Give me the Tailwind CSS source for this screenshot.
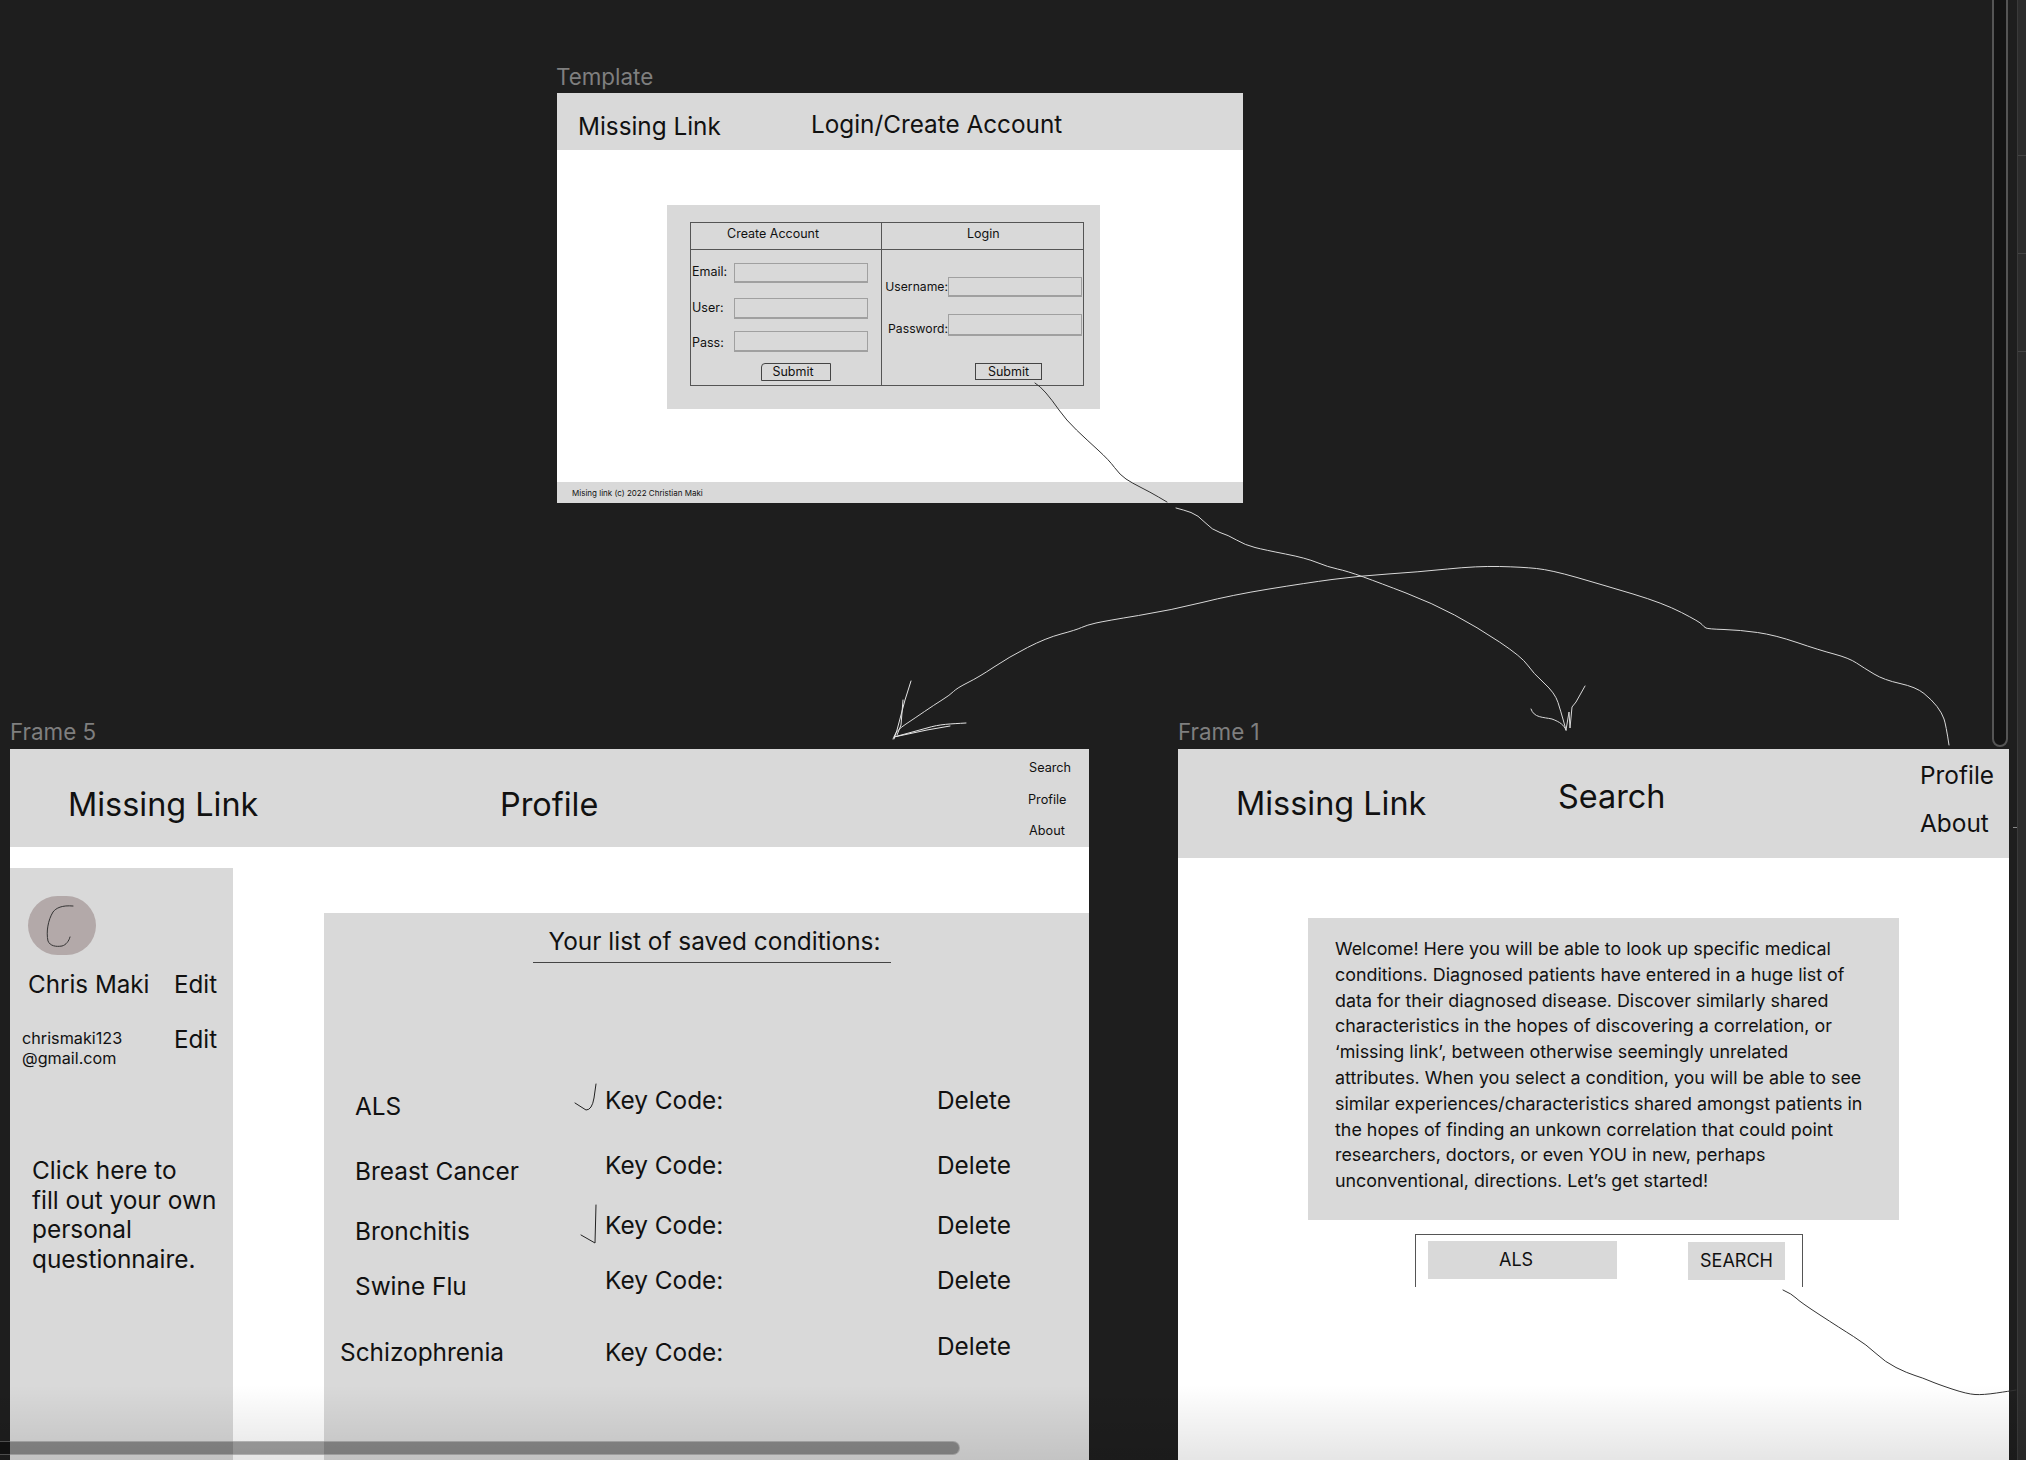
<!DOCTYPE html>
<html lang="en">
<head>
  <meta charset="UTF-8">
  <title>Missing Link wireframes</title>
  <script src="https://cdn.jsdelivr.net/npm/@tailwindcss/browser@4"></script>
</head>
<body class="bg-[#1e1e1e]">
<main class="relative w-[2026px] h-[1460px] overflow-hidden bg-[#1e1e1e] font-['Inter',sans-serif] text-[#111]">

  <!-- right hand panel edge -->
  <aside class="absolute left-[2017px] top-0 w-[9px] h-full flex flex-col bg-[#2c2c2c] border-l border-[#3a3a3a]">
    <div class="h-[156px] border-b border-[#444]"></div>
    <div class="h-[98px] border-b border-[#444]"></div>
    <div class="h-[98px] border-b border-[#444]"></div>
  </aside>
  <div class="absolute left-[1992px] top-[-20px] w-[16px] h-[767px] bg-[#141414] border-2 border-[#555] rounded-b-full"></div>
  <div class="absolute left-[2013px] top-[827px] w-[4px] h-px bg-[#888]"></div>

  <!-- Template frame -->
  <div class="absolute left-[556px] top-[64px] text-[22.4px] leading-[26px] text-[#7f7f7f]">Template</div>
  <section class="absolute left-[557px] top-[93px] w-[686px] h-[410px] flex flex-col bg-white">
    <header class="h-[57px] flex items-center bg-[#d9d9d9] text-[24.3px] leading-[30px]">
      <h1 class="ml-[21px] w-[233px] mt-[9px]">Missing Link</h1>
      <h2 class="mt-[4px]">Login/Create Account</h2>
    </header>
    <div class="ml-[110px] mt-[55px] w-[433px] h-[204px] pt-[17px] pl-[23px] bg-[#d9d9d9] text-[12.5px] leading-[16px]">
      <div class="w-[394px] h-[164px] grid grid-cols-[191px_1fr] grid-rows-[27px_1fr] border border-[#555]">
        <div class="flex items-center pl-[36px] pb-[5px] border-b border-r border-[#555]">Create Account</div>
        <div class="flex items-center pl-[85px] pb-[5px] border-b border-[#555]">Login</div>
        <div class="pl-[1px] border-r border-[#555] flex flex-col">
          <div class="flex items-center mt-[13px] h-[20px]">
            <span class="w-[42px] -mt-[2px]">Email:</span>
            <span class="w-[134px] h-[20px] border border-[#a0a0a0] border-b-2"></span>
          </div>
          <div class="flex items-center mt-[15px] h-[21px]">
            <span class="w-[42px] -mt-[2px]">User:</span>
            <span class="w-[134px] h-[21px] border border-[#a0a0a0] border-b-2"></span>
          </div>
          <div class="flex items-center mt-[12px] h-[21px]">
            <span class="w-[42px] mt-[2px]">Pass:</span>
            <span class="w-[134px] h-[21px] border border-[#a0a0a0] border-b-2"></span>
          </div>
          <button class="ml-[69px] mt-[11px] w-[70px] h-[18px] flex items-center justify-center pr-[6px] border border-[#444] rounded-tl-sm">Submit</button>
        </div>
        <div class="flex flex-col text-[12.2px]">
          <div class="flex items-center mt-[27px] h-[20px]">
            <span class="w-[66px] text-right">Username:</span>
            <span class="w-[134px] h-[20px] border border-[#a0a0a0] border-b-2"></span>
          </div>
          <div class="flex items-center mt-[17px] h-[22px]">
            <span class="w-[66px] mt-[7px] text-right">Password:</span>
            <span class="w-[134px] h-[22px] border border-[#a0a0a0] border-b-2"></span>
          </div>
          <button class="ml-[93px] mt-[27px] w-[67px] h-[17px] flex items-center justify-center border border-[#444] text-[12.5px]">Submit</button>
        </div>
      </div>
    </div>
    <footer class="mt-auto h-[21px] flex items-center pl-[15px] bg-[#d9d9d9] text-[8px]">Mising link (c) 2022 Christian Maki</footer>
  </section>

  <!-- Frame 5: profile -->
  <div class="absolute left-[10px] top-[719px] text-[22.4px] leading-[26px] text-[#7f7f7f]">Frame 5</div>
  <section class="absolute left-[10px] top-[749px] w-[1079px] h-[711px] flex flex-col bg-white">
    <header class="relative h-[98px] shrink-0 flex items-center bg-[#d9d9d9] text-[32.4px] leading-[40px]">
      <h1 class="ml-[58px] w-[432px] mt-[13px]">Missing Link</h1>
      <h2 class="mt-[13px]">Profile</h2>
      <nav class="ml-auto mr-[18px] w-[42px] flex flex-col text-[12.7px] leading-[16px] gap-[15.5px] mt-[3px]">
        <a>Search</a>
        <a class="-ml-[1px]">Profile</a>
        <a>About</a>
      </nav>
    </header>
    <div class="flex-1 flex">
      <aside class="w-[223px] mt-[21px] bg-[#d9d9d9] flex flex-col">
        <div class="relative ml-[18px] mt-[28px] w-[68px] h-[59px] rounded-full bg-[#b3a9a9]"></div>
        <div class="flex items-center mt-[15px] h-[30px] text-[24.2px] leading-[30px]">
          <span class="ml-[18px] w-[146px]">Chris Maki</span>
          <span>Edit</span>
        </div>
        <div class="flex mt-[25px]">
          <span class="ml-[12px] w-[152px] pt-[3px] text-[16.2px] leading-[20px]">chrismaki123<br>@gmail.com</span>
          <span class="text-[24.2px] leading-[30px]">Edit</span>
        </div>
        <p class="ml-[22px] mt-[88px] text-[24.4px] leading-[29.7px]">Click here to<br>fill out your own<br>personal<br>questionnaire.</p>
      </aside>
      <div class="ml-[91px] flex-1 mt-[66px] bg-[#d9d9d9] flex flex-col text-[24.4px] leading-[30px]">
        <div class="ml-[209px] mt-[13px] w-[358px] h-[37px] pl-[5px] border-b border-[#444] text-center">Your list of saved conditions:</div>
        <div class="mt-[122px] flex flex-col">
          <div class="h-[30px] flex items-center"><span class="w-[281px] pl-[31px] mt-[12px]">ALS</span><span class="w-[332px]">Key Code:</span><span>Delete</span></div>
          <div class="h-[30px] mt-[35px] flex items-center"><span class="w-[281px] pl-[31px] mt-[12px]">Breast Cancer</span><span class="w-[332px]">Key Code:</span><span>Delete</span></div>
          <div class="h-[30px] mt-[29.5px] flex items-center"><span class="w-[281px] pl-[31px] mt-[12px]">Bronchitis</span><span class="w-[332px]">Key Code:</span><span>Delete</span></div>
          <div class="h-[30px] mt-[25px] flex items-center"><span class="w-[281px] pl-[31px] mt-[12px]">Swine Flu</span><span class="w-[332px]">Key Code:</span><span>Delete</span></div>
          <div class="h-[30px] mt-[42.5px] flex items-center"><span class="w-[281px] pl-[16px]">Schizophrenia</span><span class="w-[332px]">Key Code:</span><span class="-mt-[12px]">Delete</span></div>
        </div>
      </div>
    </div>
  </section>

  <!-- Frame 1: search -->
  <div class="absolute left-[1178px] top-[719px] text-[22.4px] leading-[26px] text-[#7f7f7f]">Frame 1</div>
  <section class="absolute left-[1178px] top-[749px] w-[831px] h-[711px] flex flex-col bg-white">
    <header class="h-[109px] shrink-0 flex items-center bg-[#d9d9d9]">
      <h1 class="ml-[58px] w-[322px] mt-[1px] text-[32.4px] leading-[40px]">Missing Link</h1>
      <h2 class="w-[362px] -mt-[13px] text-[32.4px] leading-[40px]">Search</h2>
      <nav class="flex flex-col -mt-[9px] gap-[18px] text-[24.4px] leading-[30px]">
        <a>Profile</a>
        <a>About</a>
      </nav>
    </header>
    <p class="ml-[130px] mt-[60px] w-[591px] h-[302px] pl-[27px] pt-[18px] bg-[#d9d9d9] text-[17.87px] leading-[25.8px] whitespace-nowrap">Welcome! Here you will be able to look up specific medical<br>conditions. Diagnosed patients have entered in a huge list of<br>data for their diagnosed disease. Discover similarly shared<br>characteristics in the hopes of discovering a correlation, or<br>‘missing link’, between otherwise seemingly unrelated<br>attributes. When you select a condition, you will be able to see<br>similar experiences/characteristics shared amongst patients in<br>the hopes of finding an unkown correlation that could point<br>researchers, doctors, or even YOU in new, perhaps<br>unconventional, directions. Let’s get started!</p>
    <div class="ml-[237px] mt-[14px] w-[388px] h-[53px] flex border border-b-0 border-[#555] text-[18px] leading-[24px]">
      <div class="ml-[12px] mt-[6px] w-[189px] h-[38px] flex items-center pl-[71px] bg-[#d9d9d9]">ALS</div>
      <div class="ml-[71px] mt-[7px] w-[97px] h-[38px] flex items-center justify-center bg-[#d9d9d9]">SEARCH</div>
    </div>
  </section>

  <!-- hand drawn strokes -->
  <svg class="absolute left-0 top-0 w-[2026px] h-[1460px] pointer-events-none" viewBox="0 0 2026 1460" fill="none" stroke-linecap="round" stroke-linejoin="round">
    <path data-pts="1035,383 1040,386 1052,400 1066,420 1087,440 1109,460 1120,475 1132,483 1150,492 1167,502" stroke="#333"/>
    <path data-pts="1176,508 1184,510 1198,515 1212,530 1228,535 1245,545 1265,550 1306,558 1328,567 1347,571 1380,583 1432,603 1477,627 1522,657 1533,673 1555,693 1561,712 1566,730" stroke="#d8d8d8"/>
    <path d="M1585 686 L1576 702 L1572 707 L1570 728 L1569 712 L1566 730 M1531 709 C1534 718 1543 717 1552 719 C1560 722 1564 725 1566 730" stroke="#d8d8d8"/>
    <path data-pts="1949,745 1946,725 1942,713 1932,700 1916,687 1884,680 1864,668 1849,658 1819,650 1775,635 1740,630 1708,629 1704,627 1700,622 1663,603 1603,585 1551,570 1522,567 1477,566 1418,572 1358,576 1306,583 1232,595 1172,610 1105,621 1087,625 1076,630 1046,638 1009,657 979,677 957,688 950,695 934,705 915,718 897,730 893,739" stroke="#d8d8d8"/>
    <path d="M911 681 L905 700 L897 730 L894 739 M903 700 L901 725 L897 735 M966 723 C950 724 940 724 927 728 L894 737 L927 730 L950 726" stroke="#e4e4e4"/>
    <path data-pts="1783,1290 1792,1294 1800,1302 1840,1328 1867,1345 1885,1362 1907,1373 1923,1378 1937,1384 1967,1394 1983,1395 2010,1391 2016,1390" stroke="#333"/>
    <path d="M575 1103 L586 1110 Q592 1110 594 1098 L596 1084" stroke="#222"/>
    <path d="M581 1235 L595 1243 L596 1205" stroke="#222"/>
    <path d="M73 906 C62 905 56 908 53 912 C48 920 46 932 48 941 C50 946 56 947 62 946 C66 945 69 941 70 937" stroke="#333"/>
  </svg>

  <!-- bottom fade and horizontal scrollbar -->
  <div class="absolute left-0 bottom-0 w-full h-[75px] bg-linear-to-b from-black/0 to-black/10 pointer-events-none"></div>
  <div class="absolute left-0 top-[1441px] w-[960px] h-[14px] rounded-r-lg bg-black/37 border-y border-r border-white/25"></div>
</main>
<script>
  // smooth the sketched lines: midpoint quadratics through the points
  document.querySelectorAll('path[data-pts]').forEach(function (el) {
    var pts = el.dataset.pts.split(' ').map(function (p) { return p.split(',').map(Number); });
    var d = 'M' + pts[0][0] + ' ' + pts[0][1];
    for (var i = 1; i < pts.length - 1; i++) {
      var mx = (pts[i][0] + pts[i + 1][0]) / 2;
      var my = (pts[i][1] + pts[i + 1][1]) / 2;
      d += ' Q' + pts[i][0] + ' ' + pts[i][1] + ' ' + mx + ' ' + my;
    }
    var last = pts[pts.length - 1];
    d += ' L' + last[0] + ' ' + last[1];
    el.setAttribute('d', d);
  });
</script>
</body>
</html>
